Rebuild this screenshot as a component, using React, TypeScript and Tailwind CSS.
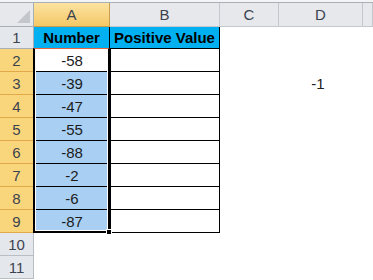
import React from 'react'

const numbers = ['-58', '-39', '-47', '-55', '-88', '-2', '-6', '-87']
const cols = ['A', 'B', 'C', 'D', '']

export default function App() {
  return (
    <div className="w-[373px] h-[280px] overflow-hidden bg-white text-[15px] leading-none font-['Liberation_Sans',Arial,sans-serif]">
      <div className="h-[3px] bg-[#f3f4f6] border-b border-[#a9afb6]" />
      <div className="grid grid-cols-[34px_76px_110px_59px_84px_1fr] grid-rows-[24px_22px_repeat(10,23px)_1fr]">
        {/* corner */}
        <div className="col-start-1 row-start-1 bg-[#e6e8eb] border-r border-b border-[#a9afb6] flex items-end justify-end p-[3px]">
          <svg width="13" height="13" viewBox="0 0 13 13">
            <polygon points="13,0 13,13 0,13" fill="#c3c7cc" />
          </svg>
        </div>
        {/* column headers */}
        {cols.map((c, i) => (
          <div
            key={i}
            className={
              'row-start-1 flex items-center justify-center border-r border-b text-[#3c4350] ' +
              (i === 0
                ? 'bg-gradient-to-b from-[#fbe3a0] to-[#f5c866] border-[#c79f4f]'
                : 'bg-[#e6e8eb] border-[#c3c8ce]')
            }
            style={{ gridColumnStart: i + 2 }}
          >
            {c}
          </div>
        ))}

        {/* row 1 */}
        <div className="col-start-1 row-start-2 bg-[#e4e7eb] border-r border-b border-[#a9afb6] flex items-center justify-center text-[#3c4350]">
          1
        </div>
        <div className="col-start-2 row-start-2 bg-[#00b0f0] border-r border-b border-black flex items-center justify-center font-bold text-black">
          Number
        </div>
        <div className="col-start-3 row-start-2 bg-[#00b0f0] border-r border-b border-black flex items-center justify-center font-bold text-black">
          Positive Value
        </div>

        {/* rows 2-9 */}
        {numbers.map((n, i) => (
          <React.Fragment key={n}>
            <div
              className="col-start-1 bg-[#f9d67b] border-r border-b border-[#e2a94a] flex items-center justify-center text-[#3c4350]"
              style={{ gridRowStart: i + 3 }}
            >
              {i + 2}
            </div>
            <div
              className={
                'col-start-2 border-b border-black flex items-center justify-center text-[#1c1c1c] ' +
                (i === 0 ? 'bg-white' : 'bg-[#a9d0f2]')
              }
              style={{ gridRowStart: i + 3 }}
            >
              {n}
            </div>
            <div
              className="col-start-3 border-l border-r border-b border-black bg-white"
              style={{ gridRowStart: i + 3 }}
            />
            {i === 1 && (
              <div className="col-start-5 row-start-4 flex items-center justify-center text-[#1c1c1c] pr-[6px]">
                -1
              </div>
            )}
          </React.Fragment>
        ))}

        {/* rows 10-11 */}
        <div className="col-start-1 row-start-11 bg-[#e4e7eb] border-r border-b border-[#b9bec5] flex items-center justify-center text-[#3c4350]">
          10
        </div>
        <div className="col-start-1 row-start-12 bg-[#e4e7eb] border-r border-b border-[#b9bec5] flex items-center justify-center text-[#3c4350]">
          11
        </div>
        <div className="col-start-1 row-start-13 bg-[#e4e7eb] border-r border-[#b9bec5]" />

        {/* selection A2:A9 */}
        <div className="col-start-2 row-start-3 row-span-8 -ml-px -mt-px relative pointer-events-none border-2 border-black border-t-[#e8663d] border-t-1 shadow-[inset_0_0_0_1px_white]">
          <div className="absolute -right-[4px] -bottom-[4px] w-[6px] h-[6px] bg-black border border-white" />
        </div>
      </div>
    </div>
  )
}
